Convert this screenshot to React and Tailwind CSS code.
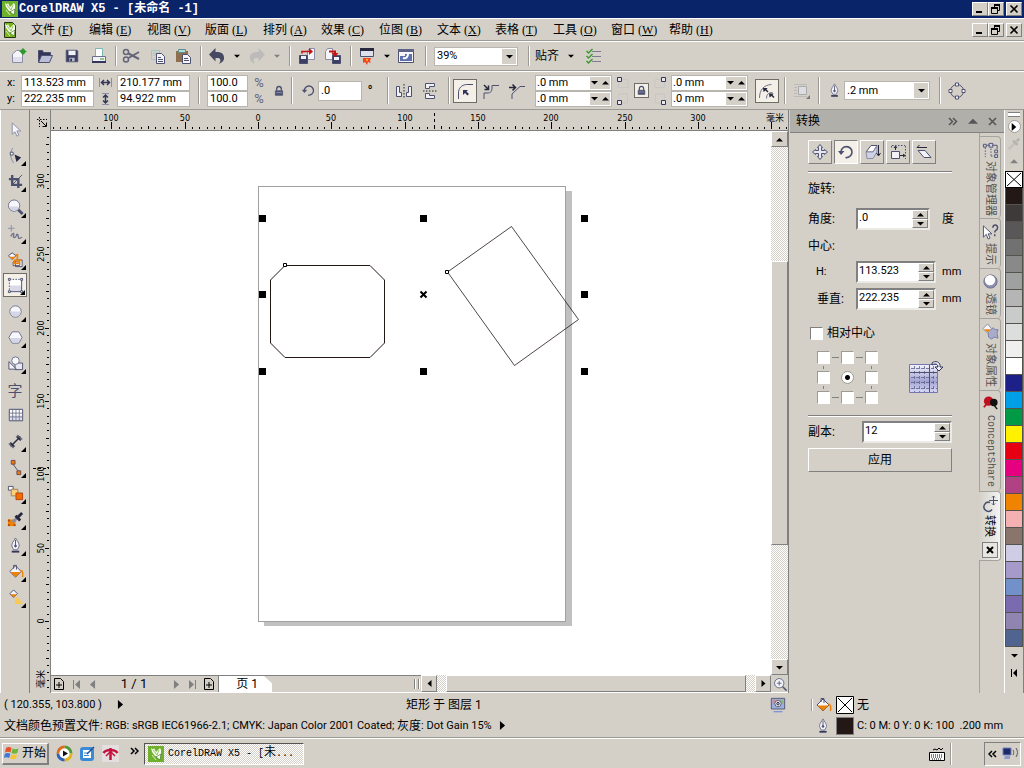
import React, { useState } from "react";

/* ================= SHARED CLASSES ================= */
const raised =
  "border border-t-white border-l-white border-r-[#808080] border-b-[#808080] bg-[#d4d0c8]";
const sunken =
  "border border-t-[#808080] border-l-[#808080] border-r-white border-b-white bg-white";
const track =
  "bg-[repeating-conic-gradient(#ffffff_0_25%,#d4d0c8_0_50%)] bg-[length:2px_2px]";
const cjk = "font-['Roboto','Noto_Sans_CJK_SC',sans-serif] text-[12px]";
const mono = "font-['Liberation_Mono','Noto_Sans_CJK_SC',monospace]";

/* ================= DATA ================= */
const menus = [
  ["文件", "F"], ["编辑", "E"], ["视图", "V"], ["版面", "L"],
  ["排列", "A"], ["效果", "C"], ["位图", "B"], ["文本", "X"],
  ["表格", "T"], ["工具", "O"], ["窗口", "W"], ["帮助", "H"],
];

const swatches = [
  "#231815", "#3e3a39", "#595757", "#727171", "#898989", "#9fa0a0",
  "#b5b5b6", "#c9caca", "#dcdddd", "#efefef", "#ffffff", "#1d2088",
  "#00a0e9", "#009944", "#fff100", "#e60012", "#e4007f", "#b04284",
  "#f08300", "#f5b0b2", "#89756b", "#cfcce6", "#a59aca", "#7290c9",
  "#7a6bb0", "#9085b0", "#4f658f",
];

/* ================= SMALL PIECES ================= */
function Icon({ size = 18, children }) {
  return (
    <svg
      width={size}
      height={size}
      viewBox="0 0 18 18"
      fill="none"
      stroke="#4d5170"
      className="block shrink-0"
    >
      {children}
    </svg>
  );
}

function Arrow({ dir = "down", color = "#000", size = 7 }) {
  const d = {
    down: "M0 2h7L3.5 5.500z",
    up: "M0 5.500h7L3.500 2z",
    left: "M5.500 0v7L1.500 3.500z",
    right: "M1.500 0v7L5.500 3.500z",
  };
  return (
    <svg width={size} height={size} viewBox="0 0 7 7" className="block shrink-0">
      <path d={d[dir]} fill={color} />
    </svg>
  );
}

function Sep({ className = "" }) {
  return (
    <span
      className={`w-[2px] shrink-0 border-l border-[#9c9a94] bg-white ${className}`}
    />
  );
}

function Tool({ label, className = "w-[26px]", children }) {
  return (
    <button
      type="button"
      aria-label={label}
      className={`flex shrink-0 items-center justify-center ${className}`}
    >
      {children}
    </button>
  );
}

function Field({ label, value, className }) {
  return (
    <input
      aria-label={label}
      defaultValue={value}
      className={`block shrink-0 border border-[#b8b5ae] bg-white pl-[2px] leading-none outline-none ${className}`}
    />
  );
}

function CornerField({ label }) {
  return (
    <div className="flex h-[16px] w-[77px] border border-[#b8b5ae] bg-white">
      <input
        aria-label={label}
        defaultValue=".0 mm"
        className="w-0 min-w-0 flex-1 bg-transparent pl-[1px] leading-none outline-none"
      />
      <div className="my-[1px] mr-[1px] flex items-start gap-[4px] bg-[#d4d0c8] px-[1px] pt-[2px]">
        <button type="button" aria-label={`${label} -`}>
          <Arrow size={7} />
        </button>
        <button type="button" aria-label={`${label} +`}>
          <Arrow dir="up" size={7} />
        </button>
      </div>
    </div>
  );
}

function SpinField({ id, value, className }) {
  return (
    <div className={`flex h-[22px] shrink-0 border-2 border-t-[#808080] border-l-[#808080] border-r-[#eceae5] border-b-[#eceae5] bg-white ${className}`}>
      <input
        id={id}
        defaultValue={value}
        className="w-0 min-w-0 flex-1 bg-transparent pb-[4px] pl-[1px] text-[11px] leading-none outline-none"
      />
      <div className="flex w-[16px] flex-col">
        <button type="button" aria-label={`${id} up`} className={`flex flex-1 items-center justify-center ${raised}`}>
          <Arrow dir="up" />
        </button>
        <button type="button" aria-label={`${id} down`} className={`flex flex-1 items-center justify-center ${raised}`}>
          <Arrow />
        </button>
      </div>
    </div>
  );
}

function Combo({ label, value, className }) {
  return (
    <div className={`relative shrink-0 ${className}`}>
      <select
        aria-label={label}
        className="h-full w-full appearance-none border border-[#b8b5ae] bg-white pl-[2px] outline-none"
      >
        <option>{value}</option>
      </select>
      <span className="pointer-events-none absolute top-[2px] right-[2px] bottom-[2px] flex w-[14px] items-center justify-center bg-[#d4d0c8]">
        <Arrow />
      </span>
    </div>
  );
}

function WindowButtons() {
  const base = `flex h-[14px] w-[16px] items-center justify-center ${raised}`;
  return (
    <div className="ml-auto flex shrink-0 pr-[2px]">
      <button type="button" aria-label="最小化" className={base}>
        <svg width="10" height="10"><path d="M1 8h6" stroke="#000" strokeWidth="2" /></svg>
      </button>
      <button type="button" aria-label="还原" className={base}>
        <svg width="10" height="10" fill="none" stroke="#000">
          <path d="M3 .5h6M3.500 1v2M8.500 1v5.500H7M.5 4v5.500h6V4" />
          <path d="M3 1.500h6M0 3.500h7M0 4.500h7" />
        </svg>
      </button>
      <button type="button" aria-label="关闭" className={`ml-[2px] ${base}`}>
        <svg width="10" height="10"><path d="M1.500 1.500l7 7M8.500 1.500l-7 7" stroke="#000" strokeWidth="1.600" /></svg>
      </button>
    </div>
  );
}

function Logo({ page }) {
  return (
    <svg width="16" height="16" viewBox="0 0 16 16" className="block shrink-0">
      {page ? (
        <path d="M2.500 .5h8l3 3v12h-11z" fill="#7ab51d" stroke="#24331a" />
      ) : (
        <path d="M0 0h16v16H0z" fill="#6fb12d" />
      )}
      <path d="M3 2l2 1.500L6 2l2 4 4-4 1 2v4l-3 3-3-1-3-4z" fill="#f6fcec" />
      <path d="M5 4l4 5M11 4L9 9" stroke="#7fb846" strokeWidth=".8" />
      <path d="M8 11l5-3-1 6z" fill="#fff" stroke="#39611b" strokeWidth=".6" />
      <path d="M4 9l4 5" stroke="#d8efb8" />
    </svg>
  );
}

/* ================= ICON ART ================= */
const disk = (
  <>
    <path d="M2.500 2.500h12l1 1v12h-13z" fill="#3b3f63" />
    <path d="M5 3h8v5H5z" fill="#f1f1f7" stroke="none" />
    <path d="M6 11h6v4H6z" fill="#b9bccd" stroke="none" />
    <path d="M7 12h2v3H7z" fill="#33365a" stroke="none" />
  </>
);

const bucket = (
  <>
    <path d="M3 9l6-6 6 6-6 6z" fill="#f5f5fa" />
    <path d="M3.500 9.500h11L9 15z" fill="#ee8207" stroke="none" />
    <path d="M7 6V2.500h3V7" />
    <path d="M14 8c3 0 3 3 2.500 7" stroke="#ee8207" strokeWidth="1.500" />
  </>
);

const pen = (
  <>
    <path d="M9 1C7 4.500 5 6.500 5 9.500L7 13.500h4l2-4C13 6.500 11 4.500 9 1z" fill="#f1f1f7" stroke="#6d708a" />
    <path d="M9 3v7" />
    <circle cx="9" cy="9.500" r="1" fill="#4d5170" />
    <path d="M5 15.500h8" strokeWidth="2" stroke="#33365a" />
  </>
);

const lock = (
  <>
    <path d="M5.500 8V6c0-5 7-5 7 0v2" strokeWidth="2" />
    <path d="M3.500 8.500h11v7h-11z" fill="#4d5170" />
    <path d="M5 11.500h8" stroke="#a9acc4" />
  </>
);

const rotate = (
  <>
    <path d="M4 9.500a5.500 5.500 0 1 1 4.500 5" strokeWidth="1.600" />
    <path d="M1 8h6.500L4 12z" fill="#4d5170" stroke="none" />
  </>
);

const move = (
  <path
    d="M9 1.500l2.500 3H10.500v3h3V6.500L16.500 9l-3 2.500V10.500h-3v3h1L9 16.500l-2.500-3h1v-3h-3v1L1.500 9l3-2.500v1h3v-3h-1z"
    fill="#e6e7f0"
  />
);

const tools = [
  { name: "挑选", art: <path d="M5.500 2v12l3-2.500 2 4.500 2-1-2-4.500h4z" fill="#f5f5fa" stroke="#8a8da5" /> },
  { name: "形状", fly: true, art: <><path d="M6 1c-3 5-3 10 1 16" stroke="#8a8da5" /><path d="M3.500 5.500h3v3h-3z" fill="#fff" /><path d="M8 8l7 3-5 5z" fill="#26283d" stroke="none" /></> },
  { name: "裁剪", fly: true, art: <><path d="M5.500 2v10.500H16M2 6.500h10V16" strokeWidth="2.500" /><path d="M16 2L6 12" strokeWidth="1" /></> },
  { name: "缩放", fly: true, art: <><circle cx="7.500" cy="7" r="6" fill="#f6f6fb" stroke="#6d708a" /><path d="M2.500 8h10c-1 6-9 6-10 0z" fill="#d4d6e6" stroke="none" /><path d="M12 11.500l4.500 4.500" strokeWidth="3" /></> },
  { name: "手绘", fly: true, art: <><path d="M4.500 0v7M1 3.500h7" stroke="#8a8da5" /><path d="M4 12c2-4 4-4 3-1s2 3 3 0 2 0 2 2 2 1 4 0" stroke="#6d708a" strokeWidth="1.400" /></> },
  { name: "智能填充", fly: true, art: <><path d="M1.500 5l4-3 4 3-4 4z" fill="#f5f5fa" /><path d="M2 6h7L5.500 9z" fill="#ee8207" stroke="none" /><path d="M9 9.500h7v7H9zM6.500 11.500h7v4h-7z" fill="#fff" /><path d="M9 4h2v6h-3v3h5v-3h2" stroke="#ee8207" strokeWidth="1.800" /></> },
  { name: "矩形", fly: true, art: <><path d="M3 3h12v12H3z" fill="#fff" stroke="none" /><path d="M3 9h12v6H3z" fill="#d9dae6" stroke="none" /><path d="M3 2.500h12M2.500 3v12" strokeDasharray="1.500 1.500" /><path d="M3 15.500h12M15.500 3v12" /><path d="M1.500 1.500h2v2h-2zM14.500 1.500h2v2h-2zM1.500 14.500h2v2h-2zM14.500 14.500h2v2h-2z" fill="#fff" /></> },
  { name: "椭圆形", fly: true, art: <><circle cx="9" cy="9" r="6" fill="#f8f8fc" stroke="#6d708a" /><path d="M3.500 9h11c-1 7-10 7-11 0z" fill="#d4d6e6" stroke="none" /></> },
  { name: "多边形", fly: true, art: <><path d="M2 9l3.500-6h7L16 9l-3.500 6h-7z" fill="#f8f8fc" stroke="#6d708a" /><path d="M3 9.500h12L12 14H6z" fill="#d4d6e6" stroke="none" /></> },
  { name: "基本形状", fly: true, art: <><path d="M8.500 8.500h8v7h-8z" fill="#e9e9f2" /><path d="M2 7v8h8z" fill="#f1f1f7" /><circle cx="9" cy="6" r="4" fill="#f8f8fc" stroke="#6d708a" /></> },
  { name: "文本", text: "字" },
  { name: "表格", art: <><path d="M2.500 2.500h14v12h-14z" fill="#fff" /><path d="M3 9h13v5H3z" fill="#dfe0ec" stroke="none" /><path d="M2.500 2.500h14v12h-14zM6 3v11M9.500 3v11M13 3v11M3 6.500h13M3 10.500h13" stroke="#6d708a" strokeWidth=".9" /></> },
  { name: "度量", fly: true, art: <><path d="M5 13l8-8" strokeWidth="1.500" stroke="#26283d" /><path d="M4 10l4 4H4zM10 4l4 4V4z" fill="#26283d" stroke="#26283d" /><path d="M2 11l5 5M11 2l5 5" stroke="#63657a" strokeWidth="1.500" /></> },
  { name: "连接器", fly: true, art: <><path d="M6 5l6 8" /><path d="M4.500 1.500h4v4h-4zM10.500 12.500h4v4h-4z" fill="#f07a00" stroke="#6b4a55" /></> },
  { name: "调和", fly: true, art: <><path d="M1.500 1.500h5v4h-5z" fill="#fff" /><path d="M4.500 4.500h7v7h-7z" fill="#fbcf7c" stroke="#a77d52" /><path d="M9.500 8.500h7v7h-7z" fill="#f46c00" stroke="#b2430b" /></> },
  { name: "滴管", fly: true, art: <><path d="M1 9h8v7H1z" fill="#ee8207" stroke="none" /><path d="M1 9h2v2H1zM7 9h2v2H7zM1 14h2v2H1zM7 14h2v2H7z" fill="#b2430b" stroke="none" /><path d="M6 12l7-7" strokeWidth="3" stroke="#8a8da5" /><path d="M9 5l5 5M12 6l4-4" strokeWidth="3" stroke="#26283d" /></> },
  { name: "轮廓笔", fly: true, art: pen },
  { name: "填充", fly: true, art: bucket },
  { name: "交互式填充", fly: true, art: <><path d="M3 5l4-4 4 4-4 4z" fill="#f5f5fa" /><path d="M3.500 5.500h7L7 9z" fill="#ee8207" stroke="none" /><path d="M9 9h3l5 7H8z" fill="#f8c95a" stroke="none" /></> },
];

/* ================= RULERS ================= */
const STEP = 22 / 3;

function HorizontalRuler() {
  const ticks = [];
  for (let n = -28; n <= 72; n++) ticks.push(n);
  return (
    <svg height="20" className="block w-full text-[9px] font-['DejaVu_Sans_Condensed','Noto_Sans_CJK_SC',sans-serif]">
      {ticks.map((n) => {
        const x = Math.round(207 + n * STEP);
        const major = n % 10 === 0;
        return (
          <g key={n}>
            <rect x={x} y={major ? 12 : n % 5 === 0 ? 16 : 17} width="1" height={major ? 7 : n % 5 === 0 ? 3 : 2} />
            {major && n < 70 && (
              <text x={x} y="11" textAnchor="middle">{Math.abs(n * 5)}</text>
            )}
          </g>
        );
      })}
      <text x="715" y="11" fontSize="9">毫米</text>
      <path d="M383.500 3v16" stroke="#000" strokeDasharray="3 3" />
    </svg>
  );
}

function VerticalRuler() {
  const ticks = [];
  for (let n = -9; n <= 66; n++) ticks.push(n);
  return (
    <svg width="20" className="block h-full text-[9px] font-['DejaVu_Sans_Condensed','Noto_Sans_CJK_SC',sans-serif]">
      {ticks.map((n) => {
        const y = Math.round(490 - n * STEP);
        const major = n % 10 === 0;
        return (
          <g key={n}>
            <rect x={major ? 15 : n % 5 === 0 ? 16 : 17} y={y} width={major ? 4 : n % 5 === 0 ? 3 : 2} height="1" />
            {major && (
              <text transform={`translate(14 ${y}) rotate(-90)`} textAnchor="middle">
                {Math.abs(n * 5)}
              </text>
            )}
          </g>
        );
      })}
      <text transform="translate(14 557) rotate(-90)" fontSize="9">毫米</text>
      <path d="M3 337.500h16" stroke="#000" strokeDasharray="3 2" />
    </svg>
  );
}

/* ================= DRAWING ================= */
function Drawing() {
  return (
    <svg className="block h-full w-full" fill="none">
      <rect x="213" y="60" width="308" height="435" fill="#c0c0c0" />
      <rect x="207.500" y="55.500" width="307" height="435" fill="#fff" stroke="#a0a0a0" />
      <path d="M234 134.500h85l14.500 14.500v63L319 226.500h-85L219.500 212v-63z" stroke="#231815" />
      <path d="M460.500 95.500l67 93-64 46-67-93.500z" stroke="#231815" strokeWidth=".8" />
      <path d="M232.500 132.500h3v3h-3zM394.500 139.500h3v3h-3z" fill="#fff" stroke="#000" />
      {[84, 160, 237].map((y) =>
        [208, 369, 530].map((x) =>
          x === 369 && y === 160 ? (
            <path key="c" d="M369.500 160.500l6 6M375.500 160.500l-6 6" stroke="#000" strokeWidth="2" />
          ) : (
            <rect key={`${x}-${y}`} x={x} y={y} width="7" height="7" fill="#000" />
          )
        )
      )}
    </svg>
  );
}

/* ================= TOP BARS ================= */
function StandardBar() {
  return (
    <div className="flex h-[30px] shrink-0 items-center border-t border-b border-t-white border-b-[#9c9a94] pl-[4px]">
      <Tool label="新建" className="w-[27px]">
        <Icon>
          <path d="M3.500 7l4-3.500h6v12h-10z" fill="#f5f5fa" stroke="#8a8da5" />
          <path d="M4 10h9v5H4z" fill="#dfe0ec" stroke="none" />
          <circle cx="14" cy="4.500" r="2.500" fill="#2d9a27" stroke="none" />
          <path d="M14 1v7M10.500 4.500h7" stroke="#2d9a27" />
        </Icon>
      </Tool>
      <Tool label="打开" className="w-[27px]">
        <Icon>
          <path d="M2.500 15V3.500h4l1 2h7V9" fill="#33365a" />
          <path d="M2.500 15.500l3-7h11l-3 7z" fill="#b9bdd6" stroke="#4d5170" />
        </Icon>
      </Tool>
      <Tool label="保存" className="w-[27px]"><Icon size={16}>{disk}</Icon></Tool>
      <Tool label="打印" className="w-[27px]">
        <Icon>
          <path d="M5.500 1.500h7v8h-7z" fill="#fff" stroke="#7db8b4" />
          <path d="M2.500 9.500h13v5h-13z" fill="#f1f1f7" stroke="#6d708a" />
          <path d="M2 15h14" strokeWidth="2" stroke="#33365a" />
          <path d="M10 12h4" stroke="#2d9a27" />
        </Icon>
      </Tool>
      <Sep className="mr-[1px] ml-[3px] h-[20px]" />
      <Tool label="剪切">
        <Icon>
          <path d="M6.500 6.500L17 12M6.500 11L17 5" strokeWidth="2" stroke="#63657a" />
          <circle cx="4" cy="5" r="2.500" strokeWidth="1.500" stroke="#63657a" />
          <circle cx="4" cy="12.500" r="2.500" strokeWidth="1.500" stroke="#63657a" />
        </Icon>
      </Tool>
      <Tool label="复制">
        <Icon>
          <path d="M3.500 3.500h8v9h-8z" stroke="#9cc9c6" />
          <path d="M5 6h5M5 8h5" stroke="#9cc9c6" />
          <path d="M8.500 6.500h5l3 3v7h-8z" fill="#f5f5fa" />
          <path d="M10 10.500h3M10 12.500h5M10 14.500h5" />
        </Icon>
      </Tool>
      <Tool label="粘贴">
        <Icon>
          <path d="M2 4h12v11H2z" fill="#8d6f4e" stroke="none" />
          <path d="M4.500 2.500h7v3h-7z" fill="#b5dcd8" stroke="#5a8e8a" />
          <path d="M8.500 7.500h5l3 3v6h-8z" fill="#f5f5fa" />
          <path d="M10 11.500h4M10 13.500h5" />
        </Icon>
      </Tool>
      <Sep className="mr-[1px] ml-[4px] h-[20px]" />
      <Tool label="撤消" className="w-[28px]">
        <Icon>
          <path d="M1 7.500L7.500 1v4c6-.5 9 2 8.500 7-.5 2-2 3.500-5 5 3-5 1-6.500-3.500-6v3.500z" fill="#454962" stroke="none" />
        </Icon>
      </Tool>
      <Tool label="撤消列表" className="w-[12px]"><Arrow size={6} /></Tool>
      <Tool label="重做" className="w-[28px]">
        <Icon>
          <path d="M17 7.500L10.500 1v4c-6-.5-9 2-8.500 7 .5 2 2 3.500 5 5-3-5-1-6.500 3.500-6v3.500z" fill="#bcbbb9" stroke="none" />
        </Icon>
      </Tool>
      <Tool label="重做列表" className="w-[12px]"><Arrow size={6} color="#808080" /></Tool>
      <Sep className="mr-[3px] ml-[6px] h-[20px]" />
      <Tool label="导入">
        <Icon>
          <path d="M9.500 4.500l2-3h5v11h-7z" fill="#f5f5fa" stroke="#8a8da5" />
          <path d="M1.500 8.500h8v8h-8z" fill="#3b3f63" />
          <path d="M3 9h5v3H3z" fill="#f1f1f7" stroke="none" />
          <path d="M4 6.500V4.500h8" stroke="#c51414" strokeWidth="1.600" />
          <path d="M11 1l4 3.500L11 8z" fill="#c51414" stroke="none" />
        </Icon>
      </Tool>
      <Tool label="导出">
        <Icon>
          <path d="M1.500 4.500l2-3h5v11h-7z" fill="#f5f5fa" stroke="#8a8da5" />
          <path d="M8.500 8.500h8v8h-8z" fill="#3b3f63" />
          <path d="M10 10h5v3h-5z" fill="#f1f1f7" stroke="none" />
          <path d="M5 4.500h6v3" stroke="#c51414" strokeWidth="2" />
          <path d="M7.500 6h7L11 10z" fill="#c51414" stroke="none" />
        </Icon>
      </Tool>
      <Sep className="mr-[1px] ml-[4px] h-[20px]" />
      <Tool label="应用程序启动器" className="w-[28px]">
        <Icon>
          <path d="M2.500 1.500h13v8h-13z" fill="#dfe0ec" />
          <path d="M2 1h14v3H2z" fill="#26283d" stroke="none" />
          <path d="M5 11h8l-1 3 1 2-3-1-1 3-2-3-2 1z" fill="#f2441d" stroke="none" />
          <path d="M8 12h2l-1 3z" fill="#ffd33c" stroke="none" />
        </Icon>
      </Tool>
      <Tool label="启动器列表" className="w-[12px]"><Arrow size={6} /></Tool>
      <Tool label="欢迎屏幕">
        <Icon>
          <path d="M1.500 2.500h15v13h-15z" fill="#f5f5fa" />
          <path d="M1 2h16v3H1z" fill="#5e6386" stroke="none" />
          <path d="M3 9h5v5H3z" fill="#5e6fae" stroke="none" />
          <path d="M8 7h7v7H8z" fill="#5e6fae" stroke="none" />
          <path d="M6 11c3 1 5-1 5-4" stroke="#fff" strokeWidth="2" />
        </Icon>
      </Tool>
      <Sep className="mr-[7px] ml-[6px] h-[20px]" />
      <Combo label="缩放级别" value="39%" className="h-[19px] w-[84px]" />
      <Sep className="mr-[5px] ml-[10px] h-[20px]" />
      <button type="button" className={`flex shrink-0 items-center ${cjk}`}>
        贴齐
        <span className="ml-[9px]"><Arrow size={6} /></span>
      </button>
      <Tool label="选项" className="ml-[6px] w-[28px]">
        <Icon>
          <path d="M7 4.500h9M7 9.500h9M7 14.500h9" stroke="#7a7d92" />
          <path d="M1.500 4l2 2 4-4M1.500 9l2 2 4-4M1.500 14l2 2 4-4" stroke="#3c9a2e" strokeWidth="1.500" />
        </Icon>
      </Tool>
    </div>
  );
}

function Corners({ flip }) {
  return (
    <svg width="16" height="30" viewBox="0 0 16 30" fill="none" className="mx-[3px] block shrink-0">
      <g transform={flip ? "translate(16 0) scale(-1 1)" : undefined}>
        <path d="M5 3.500h8v8H3.500V6M3.500 24v-6h9v9H6" stroke="#c8c6c6" />
        <path d="M2.500 1.500h4v4h-4zM2.500 24.500h4v4h-4z" fill="#e8e8ee" stroke="#33365a" />
      </g>
    </svg>
  );
}

function PropertyBar() {
  const active = "h-[24px] w-[24px] border border-[#6f6d67] bg-[#f4f0e8]";
  return (
    <div className="flex h-[39px] shrink-0 items-center border-t border-b border-t-white border-b-[#9c9a94] pl-[7px]">
      <div className="grid shrink-0 grid-cols-[14px_73px_23px_73px] items-center">
        <span>x:</span>
        <Field label="x" value="113.523 mm" className="h-[16px] w-[73px]" />
        <svg width="13" height="9" className="mx-auto" stroke="#33365a" fill="none">
          <path d="M.5 0v9M12.500 0v9" stroke="#8a8da5" />
          <path d="M2 4.500h9M5 2L2.500 4.500 5 7M8 2l2.500 2.500L8 7" strokeWidth="1.500" />
        </svg>
        <Field label="宽度" value="210.177 mm" className="h-[16px] w-[73px]" />
        <span>y:</span>
        <Field label="y" value="222.235 mm" className="h-[16px] w-[73px]" />
        <svg width="9" height="12" className="mx-auto" stroke="#33365a" fill="none">
          <path d="M1 .5h7M1 11.500h7" stroke="#8a8da5" />
          <path d="M4.500 2v8M2 4.500L4.500 2 7 4.500M2 7.500L4.500 10 7 7.500" strokeWidth="1.500" />
        </svg>
        <Field label="高度" value="94.922 mm" className="h-[16px] w-[73px]" />
      </div>
      <Sep className="mr-[7px] ml-[8px] h-[27px]" />
      <div className="grid shrink-0 grid-cols-[41px_22px] items-center">
        <Field label="水平缩放" value="100.0" className="h-[16px] w-[41px]" />
        <span className="text-center text-[13px] text-[#63657a]">%</span>
        <Field label="垂直缩放" value="100.0" className="h-[16px] w-[41px]" />
        <span className="text-center text-[13px] text-[#63657a]">%</span>
      </div>
      <Tool label="锁定比率" className="w-[18px]"><Icon size={12}>{lock}</Icon></Tool>
      <Sep className="mr-[5px] ml-[3px] h-[27px]" />
      <span className="flex w-[20px] justify-center"><Icon size={15}>{rotate}</Icon></span>
      <Field label="旋转角度" value=".0" className="h-[20px] w-[44px]" />
      <span className="w-[16px] text-center text-[14px]">°</span>
      <Sep className="mr-[2px] ml-[9px] h-[27px]" />
      <Tool label="水平镜像">
        <Icon>
          <path d="M1.500 4.500h3v6h2v4h-5zM16.500 4.500h-3v6h-2v4h5z" fill="#f1f1f7" />
          <path d="M9 2v15" strokeDasharray="1.500 1.500" stroke="#222" />
        </Icon>
      </Tool>
      <Tool label="垂直镜像">
        <Icon>
          <path d="M4.500 1.500h9v3h-5v2h-4zM4.500 16.500h9v-3h-5v-2h-4z" fill="#f1f1f7" />
          <path d="M2 9h15" strokeDasharray="1.500 1.500" stroke="#222" />
        </Icon>
      </Tool>
      <Sep className="mr-[3px] ml-[5px] h-[27px]" />
      <Tool label="圆角" className={active}>
        <Icon>
          <path d="M2.500 17V11c0-5 3-8 8-8.500h6.500" />
          <path d="M7 8h5l-1.500 1.500 2.500 2.500-1.500 1.500L9 11l-2 2z" fill="#33365a" stroke="none" />
        </Icon>
      </Tool>
      <Tool label="扇形角">
        <Icon>
          <path d="M3 17v-6h3c4 0 5-2 5-5V3.500h7" />
          <path d="M3 3l4 4M7.500 3.500v4h-4" stroke="#26283d" strokeWidth="1.500" />
        </Icon>
      </Tool>
      <Tool label="倒棱角" className="w-[27px]">
        <Icon>
          <path d="M4 17v-5l8-7.500h5" />
          <path d="M1 5.500h6M4.500 2.500l3 3-3 3" stroke="#26283d" strokeWidth="1.500" />
        </Icon>
      </Tool>
      <div className="ml-[5px] shrink-0">
        <CornerField label="左上角半径" />
        <CornerField label="左下角半径" />
      </div>
      <Corners />
      <Tool label="同时编辑所有角" className="h-[15px] w-[15px] border border-[#6f6d67] bg-[#f4f0e8]">
        <Icon size={11}>{lock}</Icon>
      </Tool>
      <Corners flip />
      <div className="shrink-0">
        <CornerField label="右上角半径" />
        <CornerField label="右下角半径" />
      </div>
      <Tool label="相对的角缩放" className={`ml-[7px] ${active}`}>
        <Icon>
          <path d="M1.500 16c0-8 4-13 12-13.500M8.500 16.500c0-4 2-6 6-6" stroke="#6d708a" />
          <path d="M5 6h4.500L8.500 7.500l2 2-1 1-2-2L5.500 10zM11 11.500h4.500l-1 1.500 2 2-1 1-2-2-2 1.500z" fill="#26283d" stroke="none" />
        </Icon>
      </Tool>
      <Sep className="mr-[3px] ml-[5px] h-[27px]" />
      <Tool label="文本换行">
        <Icon>
          <path d="M1 2.500h13M1 5.500h3M1 8.500h3M1 11.500h3M1 14.500h13" stroke="#bdbbb7" />
          <path d="M5.500 4.500h8v8h-8z" fill="#dddce0" stroke="#aaa9ab" />
          <path d="M17 13v4h-4z" fill="#777" stroke="none" />
        </Icon>
      </Tool>
      <Sep className="mr-[5px] ml-[3px] h-[27px]" />
      <span className="flex w-[19px] justify-center"><Icon size={15}>{pen}</Icon></span>
      <Combo label="轮廓宽度" value=".2 mm" className="h-[19px] w-[86px]" />
      <Sep className="mr-[3px] ml-[9px] h-[27px]" />
      <Tool label="转换为曲线">
        <Icon>
          <circle cx="9" cy="9" r="6.500" />
          <path d="M7.500 1h3v3h-3zM7.500 14h3v3h-3zM1 7.500h3v3H1zM14 7.500h3v3h-3z" fill="#fff" />
        </Icon>
      </Tool>
    </div>
  );
}

/* ================= TOOLBOX ================= */
function Toolbox() {
  const [current, setCurrent] = useState("矩形");
  return (
    <div className="flex w-[30px] shrink-0 flex-col items-center overflow-hidden border-r border-r-[#808080] border-l border-l-white pt-[6px]">
      {tools.map((t) => (
        <button
          key={t.name}
          type="button"
          aria-label={t.name}
          onClick={() => setCurrent(t.name)}
          className={`relative my-[1px] flex h-[24px] w-[24px] shrink-0 items-center justify-center ${
            current === t.name ? "border border-[#6f6d67] bg-[#f4f0e8]" : ""
          }`}
        >
          {t.text ? (
            <span className="text-[15px] leading-none text-[#4d5170] font-['Noto_Sans_CJK_SC',sans-serif]">{t.text}</span>
          ) : (
            <Icon size={17}>{t.art}</Icon>
          )}
          {t.fly && (
            <svg width="5" height="5" className="absolute right-[1px] bottom-[1px]">
              <path d="M5 0v5H0z" />
            </svg>
          )}
        </button>
      ))}
    </div>
  );
}

/* ================= WORKSPACE ================= */
function Workspace() {
  const arrow = `flex shrink-0 items-center justify-center ${raised}`;
  return (
    <div className="flex min-w-0 flex-1 border-r border-[#808080]">
      <div className="flex w-[21px] shrink-0 flex-col border-r border-[#808080]">
        <svg width="20" height="21" fill="none" stroke="#000" className="block shrink-0">
          <path d="M7 9.500h10M9.500 7v10" strokeDasharray="1.500 1.500" />
          <path d="M11 11l5 5M16.500 12.500v4h-4" />
        </svg>
        <div className="min-h-0 flex-1">
          <VerticalRuler />
        </div>
      </div>

      <div className="flex min-w-0 flex-1 flex-col">
        <div className="h-[21px] shrink-0 overflow-hidden border-b border-[#808080]">
          <HorizontalRuler />
        </div>

        <div className="flex min-h-0 flex-1">
          <div className="min-w-0 flex-1 bg-white">
            <Drawing />
          </div>
          <div className={`flex w-[17px] shrink-0 flex-col ${track}`}>
            <button type="button" aria-label="向上滚动" className={`h-[16px] ${arrow}`}><Arrow dir="up" /></button>
            <div className="flex-[114]" />
            <div className={`flex-[284] ${raised}`} />
            <div className="flex-[114]" />
            <button type="button" aria-label="向下滚动" className={`h-[16px] ${arrow}`}><Arrow /></button>
          </div>
        </div>

        {/* PAGE NAVIGATOR */}
        <div className="flex h-[18px] shrink-0 border-b border-white">
          <div className="flex w-[370px] shrink-0 items-center border-t border-[#808080]">
            {[0, 1].map((side) => (
              <React.Fragment key={side}>
                {side === 1 && (
                  <span className="w-[68px] text-center text-[13px]">1 / 1</span>
                )}
                <div className={`flex items-center ${side ? "flex-row-reverse" : ""}`}>
                  <button type="button" aria-label={side ? "在后面添加页" : "在前面添加页"} className="flex w-[16px] justify-center">
                    <svg width="10" height="12" fill="none" stroke="#000">
                      <path d="M.5 .5h6l3 3v8h-9zM5 4v6M2 7h6" />
                    </svg>
                  </button>
                  <button type="button" aria-label={side ? "末页" : "首页"} className="flex w-[17px] justify-center">
                    <svg width="8" height="9" fill="#808080">
                      {side ? <path d="M0 0l5 4.500L0 9zM6 0h1v9H6z" /> : <path d="M8 0L3 4.500 8 9zM1 0h1v9H1z" />}
                    </svg>
                  </button>
                  <button type="button" aria-label={side ? "下一页" : "上一页"} className="flex w-[16px] justify-center">
                    <Arrow dir={side ? "right" : "left"} color="#808080" size={9} />
                  </button>
                </div>
              </React.Fragment>
            ))}
            <button
              type="button"
              className={`ml-[1px] h-full w-[54px] border-l border-[#808080] bg-white pr-[14px] text-right leading-none [clip-path:polygon(0_0,85%_0,100%_45%,100%_100%,0_100%)] ${cjk}`}
            >
              页 1
            </button>
            <span className="mr-[1px] ml-auto flex gap-[2px]">
              <span className="h-[10px] w-[2px] border-l border-[#808080] bg-white" />
              <span className="h-[10px] w-[2px] border-l border-[#808080] bg-white" />
            </span>
          </div>
          <button type="button" aria-label="向左滚动" className={`w-[16px] ${arrow}`}><Arrow dir="left" /></button>
          <div className={`w-[9px] ${track}`} />
          <div className={`flex-1 ${raised}`} />
          <div className={`w-[9px] ${track}`} />
          <button type="button" aria-label="向右滚动" className={`w-[16px] ${arrow}`}><Arrow dir="right" /></button>
          <button type="button" aria-label="导航器" className="flex w-[17px] items-center justify-center">
            <Icon size={14}>
              <circle cx="8" cy="8" r="6" fill="#f1f1f7" />
              <path d="M5 8h6M8 5v6" />
              <path d="M12.500 12.500l5 5" strokeWidth="2" />
            </Icon>
          </button>
        </div>
      </div>
    </div>
  );
}

/* ================= DOCKER ================= */
const transforms = [
  { name: "位置", art: move },
  { name: "旋转", art: rotate },
  { name: "缩放和镜像", art: <><path d="M3 9l5-6.500h6L10 9z" fill="#fff" /><path d="M3 9h7l4-6v6l-4 6.500H4z" fill="#cfd2e4" stroke="#8a8da5" /><path d="M15.500 2v10M13.500 10l2 3 2-3" stroke="#26283d" /></> },
  { name: "大小", art: <><path d="M2.500 8.500h8v7h-8z" fill="#f1f1f7" /><path d="M3 2.500h13M16.500 3v13M2.500 3v3" strokeDasharray="1.500 1.500" /><path d="M6.500 7V4M11 12.500h5M5 5l1.500-2L8 5M14 11l2 1.500-2 1.500" stroke="#26283d" /></> },
  { name: "倾斜", art: <><path d="M3 7.500h7l6 7H9z" fill="#f1f1f7" /><path d="M12 4.500H2M4.500 2L2 4.500H5" stroke="#26283d" /></> },
];

const tabs = [
  { name: "对象管理器", h: "h-[82px]", art: <><path d="M1.500 3.500h3v3h-3zM7.500 2.500h4v4h-4zM13.500 9.500h3v3h-3zM13.500 14.500h3v3h-3z" fill="#cfd2e4" /><path d="M5 4.500h3M11 4.500h5v4" /><path d="M3.500 7v10M9.500 8v9M9.500 16h4" strokeDasharray="1.500 1.500" /></> },
  { name: "提示", h: "h-[50px]", art: <><path d="M1.500 3v12l3-3 2 5 2-1-2-4.500h4z" fill="#fff" /><path d="M11.500 5c0-4 5-4 5 0 0 3-3 2-3 5M13.500 12v2" strokeWidth="1.600" /></> },
  { name: "透镜", h: "h-[50px]", art: <><circle cx="9" cy="9" r="7" fill="#8b8fb0" stroke="#6d708a" /><circle cx="8.500" cy="7.500" r="5.500" fill="#fff" stroke="none" /></> },
  { name: "对象属性", h: "h-[72px]", art: <><path d="M6 6l3 1 3-2 2 2 3 0-1 4 1 5-4-1-3 2-3-2z" fill="#a8abca" stroke="#7b7ea6" /><path d="M1 6l5-5 4 5-4 5z" fill="#f5f5fa" stroke="#8a8da5" /><path d="M2 6.500h7L6 10z" fill="#ee8207" stroke="none" /></> },
  { name: "ConceptShare", h: "h-[101px]", latin: true, art: <><circle cx="7" cy="6.500" r="5" fill="#c01020" stroke="none" /><path d="M2 13l4-5" stroke="#c01020" strokeWidth="2" /><circle cx="12.500" cy="8" r="4" fill="#111" stroke="none" /><path d="M13 11l3 4" stroke="#111" strokeWidth="1.500" /></> },
];

function AnchorGrid() {
  const cell =
    "block h-[13px] w-[13px] appearance-none border border-t-[#9c9a94] border-l-[#9c9a94] border-r-white border-b-white bg-white";
  return (
    <div className="relative ml-[9px] grid w-[61px] grid-cols-[13px_13px_13px] justify-between gap-y-[7px]">
      <svg className="absolute inset-0 h-full w-full" stroke="#808080">
        <path d="M15 6.500h7M39 6.500h7M15 46.500h7M39 46.500h7M6.500 15v3M54.500 15v3M6.500 35v3M54.500 35v3" />
      </svg>
      {[0, 1, 2, 3, 4, 5, 6, 7, 8].map((i) =>
        i === 4 ? (
          <input
            key={i}
            type="radio"
            aria-label="中心锚点"
            defaultChecked
            className="block h-[13px] w-[13px] appearance-none rounded-full border border-[#9c9a94] bg-white bg-[radial-gradient(circle,#000_2px,#fff_3px)]"
          />
        ) : (
          <input key={i} type="checkbox" aria-label={`锚点 ${i + 1}`} className={cell} />
        )
      )}
    </div>
  );
}

function Docker() {
  return (
    <aside className={`flex w-[215px] shrink-0 flex-col ${cjk}`}>
      <div className="ml-[1px] flex h-[23px] shrink-0 items-center border-b border-[#808080] bg-[#b0afaa] pr-[7px] pl-[6px]">
        <h2>转换</h2>
        <div className="ml-auto flex items-center gap-[10px]">
          <button type="button" aria-label="折叠">
            <svg width="10" height="9" fill="none" stroke="#555" strokeWidth="1.500"><path d="M1 1l3.500 3.500L1 8M5 1l3.500 3.500L5 8" /></svg>
          </button>
          <button type="button" aria-label="卷起"><Arrow dir="up" color="#555" size={10} /></button>
          <button type="button" aria-label="关闭泊坞窗">
            <svg width="9" height="9" stroke="#555" strokeWidth="1.600"><path d="M1 1l7 7M8 1L1 8" /></svg>
          </button>
        </div>
      </div>

      <div className="flex min-h-0 flex-1">
        <div className="w-[190px] shrink-0 pt-[7px] pr-[27px] pl-[19px]">
          <div className="flex gap-[2px]">
            {transforms.map((t, i) => (
              <button
                key={t.name}
                type="button"
                aria-label={t.name}
                className={`flex h-[24px] w-[24px] shrink-0 items-center justify-center ${
                  i === 1
                    ? "border border-t-[#808080] border-l-[#808080] border-r-white border-b-white bg-[#f4f0e8]"
                    : raised
                }`}
              >
                <Icon size={18}>{t.art}</Icon>
              </button>
            ))}
          </div>
          <div className="mt-[7px] h-[2px] border-t border-[#808080] bg-white" />

          <p className="mt-[7px] leading-[18px]">旋转:</p>
          <div className="mt-[10px] flex h-[22px] items-center">
            <label htmlFor="angle" className="w-[48px] shrink-0">角度:</label>
            <SpinField id="angle" value=".0" className="w-[74px]" />
            <span className="ml-[12px]">度</span>
          </div>
          <p className="mt-[7px] leading-[18px]">中心:</p>
          <div className="mt-[6px] flex h-[22px] items-center">
            <label htmlFor="centerH" className="w-[48px] shrink-0 pl-[8px] text-[11px]">H:</label>
            <SpinField id="centerH" value="113.523" className="w-[80px]" />
            <span className="ml-[6px] text-[11px]">mm</span>
          </div>
          <div className="mt-[5px] flex h-[22px] items-center">
            <label htmlFor="centerV" className="w-[48px] shrink-0 pl-[9px]">垂直:</label>
            <SpinField id="centerV" value="222.235" className="w-[80px]" />
            <span className="ml-[6px] text-[11px]">mm</span>
          </div>

          <label className="mt-[14px] flex h-[18px] items-center gap-[4px] pl-[2px]">
            <input type="checkbox" className={`h-[13px] w-[13px] appearance-none ${sunken}`} />
            相对中心
          </label>

          <div className="mt-[9px] flex items-start">
            <div className="w-[101px] shrink-0">
              <AnchorGrid />
            </div>
            <svg width="36" height="36" viewBox="0 0 36 36" fill="none" className="mt-[9px] shrink-0">
              <defs>
                <linearGradient id="sheet" x1="0" y1="0" x2="0" y2="1">
                  <stop offset="0" stopColor="#f4f4ff" />
                  <stop offset=".6" stopColor="#a3a3d2" />
                  <stop offset="1" stopColor="#d9d9f6" />
                </linearGradient>
              </defs>
              <path d="M.5 4.500h28v28H.5z" fill="url(#sheet)" stroke="#7577ae" />
              <path d="M2 8.500h26M2 17.500h26M2 22.500h26M2 28.500h26M5.500 6v26M10.500 6v26M15.500 6v26M24.500 6v26" stroke="#5d6188" strokeDasharray="3 2" strokeWidth=".8" />
              <path d="M1 12.500h27M20.500 5v27" stroke="#4d5170" />
              <path d="M23 3c3-3 9-1 8 4h3l-4 4-4-4h3c0-3-3-4-6-2z" stroke="#33365a" fill="#f1f1f7" />
            </svg>
          </div>

          <div className="mt-[11px] h-[2px] border-t border-[#808080] bg-white" />
          <div className="mt-[4px] flex h-[22px] items-center">
            <label htmlFor="copies" className="w-[54px] shrink-0">副本:</label>
            <SpinField id="copies" value="12" className="w-[90px]" />
          </div>
          <button type="button" className={`mt-[5px] h-[24px] w-[144px] ${raised}`}>应用</button>
        </div>

        {/* DOCKER TABS */}
        <div className="w-[22px] border-l border-[#a5a39d] pt-[3px]">
          {tabs.map((t) => (
            <button
              key={t.name}
              type="button"
              className={`flex w-[21px] flex-col items-center gap-[3px] overflow-hidden rounded-r-[4px] border-t border-r border-[#a5a39d] pt-[4px] ${t.h}`}
            >
              <Icon size={17}>{t.art}</Icon>
              <span
                className={`leading-none whitespace-nowrap text-[#55534e] [text-orientation:sideways] [writing-mode:vertical-rl] ${
                  t.latin ? `text-[10px] ${mono}` : "text-[11px]"
                }`}
              >
                {t.name}
              </span>
            </button>
          ))}
          <div className="-ml-[1px] flex h-[70px] w-[22px] flex-col items-center rounded-r-[4px] border-t border-r border-b border-[#a5a39d] bg-linear-to-r from-[#d4d0c8] to-[#f4f4f4] pt-[3px]">
            <Icon size={18}>
              <path d="M11 14.500a4.500 4.500 0 1 1-2-7" strokeWidth="1.500" />
              <path d="M12.500 1v9M8 5.500h9M11 2.500l1.500-1.500L14 2.500M11 8.500l1.500 1.500L14 8.500" />
            </Icon>
            <span className="mt-[2px] text-[11px] leading-none whitespace-nowrap [text-orientation:sideways] [writing-mode:vertical-rl]">
              转换
            </span>
            <button type="button" aria-label="关闭转换" className="mt-auto mb-[2px] flex h-[16px] w-[16px] items-center justify-center border border-[#808080] bg-[#e8e6e1]">
              <svg width="8" height="8" stroke="#000" strokeWidth="2"><path d="M1 1l6 6M7 1L1 7" /></svg>
            </button>
          </div>
        </div>
      </div>
    </aside>
  );
}

/* ================= PALETTE ================= */
function Palette() {
  return (
    <div className="flex w-[20px] shrink-0 flex-col items-center overflow-hidden border-r border-l border-r-[#808080] border-l-white">
      <span className="mt-[2px] h-[5px] w-[12px] shrink-0 border-t border-b border-[#808080] bg-white" />
      <button type="button" aria-label="调色板菜单" className="mt-[3px] flex h-[13px] w-[13px] shrink-0 items-center justify-center rounded-full border border-[#9c9a94] bg-white">
        <Arrow dir="right" size={8} />
      </button>
      <button type="button" aria-label="吸管" className="mt-[3px] shrink-0">
        <Icon size={16}>
          <path d="M3 15l8-8" stroke="#c4c2bd" strokeWidth="3" />
          <path d="M8 5l5 5M12 6l3-3" stroke="#b6b4af" strokeWidth="3" />
        </Icon>
      </button>
      <button type="button" aria-label="向上" className="mt-[5px] mb-[6px] shrink-0"><Arrow dir="up" color="#808080" size={8} /></button>
      <button type="button" aria-label="无填充" className="h-[17px] w-[18px] shrink-0 border border-black bg-white">
        <svg width="16" height="15" stroke="#000"><path d="M1 1l14 13M15 1L1 14" /></svg>
      </button>
      {swatches.map((c) => (
        <button
          key={c}
          type="button"
          aria-label={c}
          style={{ backgroundColor: c }}
          className="h-[17px] w-[18px] shrink-0 border-r border-b border-l border-[#55534e]"
        />
      ))}
      <button type="button" aria-label="向下" className="mt-[5px] shrink-0"><Arrow /></button>
      <button type="button" aria-label="到开头" className="mt-[10px] shrink-0">
        <svg width="8" height="8"><path d="M1 0h1v8H1zM7 0v8L3 4z" /></svg>
      </button>
    </div>
  );
}

/* ================= STATUS BAR ================= */
function StatusBar() {
  return (
    <div className="flex h-[45px] shrink-0 flex-col border-b border-[#9c9a94] pt-[1px] pl-[4px]">
      <div className="flex h-[21px] items-center">
        <div className="flex w-[402px] shrink-0 items-center gap-[14px] whitespace-pre">
          ( 120.355, 103.800 )
          <Arrow dir="right" size={9} />
        </div>
        <span className={cjk}>矩形 于 图层 1</span>
        <span className="ml-auto"><Icon size={16}>
          <path d="M1.500 1.500h15v12h-15z" fill="#9db0dd" />
          <path d="M3 3h6v5H3z" fill="#c98b94" stroke="none" />
          <path d="M9 3h6v5H9z" fill="#8fb58f" stroke="none" />
          <circle cx="9" cy="7.500" r="3.500" fill="#fff" />
          <circle cx="9" cy="7.500" r="1.500" fill="#9db0dd" stroke="#26283d" />
          <path d="M4 16.500h10" stroke="#7f93d8" strokeWidth="1.500" />
        </Icon></span>
        <Sep className="ml-[25px] h-[12px]" />
        <div className="flex w-[211px] items-center pl-[1px]">
          <Icon>{bucket}</Icon>
          <svg width="18" height="18" fill="#fff" stroke="#000" className="ml-[4px]">
            <path d="M.5 .5h17v17H.5zM2 2l14 14M16 2L2 16" />
          </svg>
          <span className={`ml-[3px] ${cjk}`}>无</span>
        </div>
      </div>
      <div className="flex h-[21px] items-center">
        <div className="flex items-center whitespace-pre">
          <span className={cjk}>文档颜色预置文件</span>
          {": RGB: sRGB IEC61966-2.1; CMYK: Japan Color 2001 Coated; "}
          <span className={cjk}>灰度</span>
          {": Dot Gain 15%"}
          <span className="ml-[6px]"><Arrow dir="right" size={9} /></span>
        </div>
        <div className="ml-auto flex w-[211px] items-center pl-[2px] whitespace-pre">
          <Icon size={16}>{pen}</Icon>
          <span className="mr-[3px] ml-[5px] h-[18px] w-[18px] shrink-0 border border-[#808080] bg-[#231815]" />
          {"C: 0 M: 0 Y: 0 K: 100  .200 mm"}
        </div>
      </div>
    </div>
  );
}

/* ================= TASKBAR ================= */
function Taskbar() {
  return (
    <div className="flex h-[30px] shrink-0 items-center border-t border-white pr-[3px] pl-[2px]">
      <button type="button" className={`flex h-[22px] w-[47px] shrink-0 items-center gap-[2px] border-r-2 border-b-2 pl-[1px] ${raised} ${cjk}`}>
        <svg width="16" height="16" viewBox="0 0 16 16" className="shrink-0">
          <path d="M2 3c2-1.500 4-1 5.500 0L6.500 7.500C5 6.500 3 6.500 1 7.500z" fill="#e8502a" />
          <path d="M8.500 3.500c2 1 4 1 6 0l-1.200 4.500c-2 1-4 1-5.800 0z" fill="#6cb63c" />
          <path d="M.8 8.800c2-1 4-1 5.500 0L5.200 13c-1.600-1-3.600-1-5.200 0z" fill="#3f76d8" />
          <path d="M7.300 9.300c2 1 4 1 5.900 0L12 13.500c-2 1-4 1-5.800 0z" fill="#f7c52f" />
        </svg>
        开始
      </button>
      <div className="ml-[7px] flex items-center gap-[6px]">
        <button type="button" aria-label="媒体播放器">
          <svg width="17" height="17" viewBox="0 0 17 17" fill="none">
            <path d="M8.500 2a6.500 6.500 0 0 1 6.500 6.500" stroke="#4e9c35" strokeWidth="3" />
            <path d="M15 8.500A6.500 6.500 0 0 1 8.500 15" stroke="#e9b21d" strokeWidth="3" />
            <path d="M8.500 15A6.500 6.500 0 0 1 2 8.500" stroke="#2c62b8" strokeWidth="3" />
            <path d="M2 8.500A6.500 6.500 0 0 1 8.500 2" stroke="#e06a1c" strokeWidth="3" />
            <circle cx="8.500" cy="8.500" r="5" fill="#fff" />
            <path d="M7 5.500v6l5-3z" fill="#111" />
          </svg>
        </button>
        <button type="button" aria-label="显示桌面">
          <svg width="17" height="17" viewBox="0 0 17 17" fill="none">
            <rect x="1" y="2" width="14" height="14" rx="3" fill="#3b8ad8" />
            <path d="M4 5h8v8H4z" fill="#fff" />
            <path d="M5 8h4M5 10.500h5" stroke="#3b8ad8" />
            <path d="M8 9l7-7" stroke="#1b4f97" strokeWidth="1.500" />
          </svg>
        </button>
        <button type="button" aria-label="快捷方式">
          <svg width="17" height="17" viewBox="0 0 17 17" fill="none">
            <path d="M0 0h17v17H0z" fill="#e2dfde" />
            <path d="M1.500 8c2-3 4-3 7-3s5 0 7 3M8.500 3v12" stroke="#c4123f" strokeWidth="2.500" />
            <path d="M4 11l4-4M13 11L9 7" stroke="#c4123f" strokeWidth="1.500" />
          </svg>
        </button>
      </div>
      <svg width="9" height="8" fill="none" stroke="#000" strokeWidth="1.500" className="mr-[5px] mb-[6px] ml-[11px] shrink-0">
        <path d="M1 1l3 3-3 3M5 1l3 3-3 3" />
      </svg>
      <button type="button" className={`flex h-[22px] w-[160px] shrink-0 items-center gap-[4px] border border-t-[#55534e] border-l-[#55534e] border-r-white border-b-white pl-[3px] text-[10px] whitespace-nowrap ${track} ${mono}`}>
        <Logo />
        <span>
          CorelDRAW X5 - [<span className="text-[12px]">未</span>...
        </span>
      </button>
      <button type="button" aria-label="键盘" className="ml-auto">
        <svg width="17" height="14" fill="none" stroke="#000">
          <path d="M.5 5.500h15v8h-15z" fill="#fff" />
          <path d="M2 8h12M2 10h12M3 12h10" strokeDasharray="1 1" />
          <path d="M4 3l2-1 2 1 2-2 2 2 2-2" />
        </svg>
      </button>
      <Sep className="mr-[32px] ml-[4px] h-[22px]" />
      <div className="flex h-[24px] w-[37px] items-center justify-center gap-[5px] border border-t-[#808080] border-l-[#808080] border-r-white border-b-white">
        <svg width="9" height="8" fill="none" stroke="#000" strokeWidth="1.500">
          <path d="M4 1L1 4l3 3M8 1L5 4l3 3" />
        </svg>
        <svg width="16" height="14" fill="none">
          <path d="M1 1h8v7H1z" fill="#1e2a66" stroke="#6f7fc4" />
          <path d="M3 9h5v3H2z" fill="#8d9bd0" />
          <path d="M11 3c1 2 1 3 0 5M14 1c2 3 2 6 0 9" stroke="#555" />
        </svg>
      </div>
    </div>
  );
}

/* ================= APP ================= */
function App() {
  return (
    <div className="flex h-screen flex-col overflow-hidden bg-[#d4d0c8] font-['Roboto','Noto_Sans_CJK_SC',sans-serif] text-[11px] leading-[14px] text-black">
      <header className={`flex h-[18px] shrink-0 items-center bg-[#0a246a] pl-[2px] text-white ${mono}`}>
        <Logo />
        <h1 className="ml-[1px] text-[12px] font-bold whitespace-nowrap">CorelDRAW X5 - [未命名 -1]</h1>
        <WindowButtons />
      </header>

      <nav className="flex h-[23px] shrink-0 items-center border-t border-b border-t-white border-b-[#9c9a94] pl-[2px]">
        <Logo page />
        <div className="ml-[13px] flex">
          {menus.map(([name, key]) => (
            <button key={key} type="button" className="flex w-[58px] items-center gap-[3px] whitespace-nowrap">
              <span className={cjk}>{name}</span>
              <span className="text-[12px] font-['Liberation_Serif',serif]">
                (<u>{key}</u>)
              </span>
            </button>
          ))}
        </div>
        <WindowButtons />
      </nav>

      <StandardBar />
      <PropertyBar />

      <main className="flex min-h-0 flex-1">
        <Toolbox />
        <Workspace />
        <Docker />
        <Palette />
      </main>

      <StatusBar />
      <Taskbar />
    </div>
  );
}

export default App;
